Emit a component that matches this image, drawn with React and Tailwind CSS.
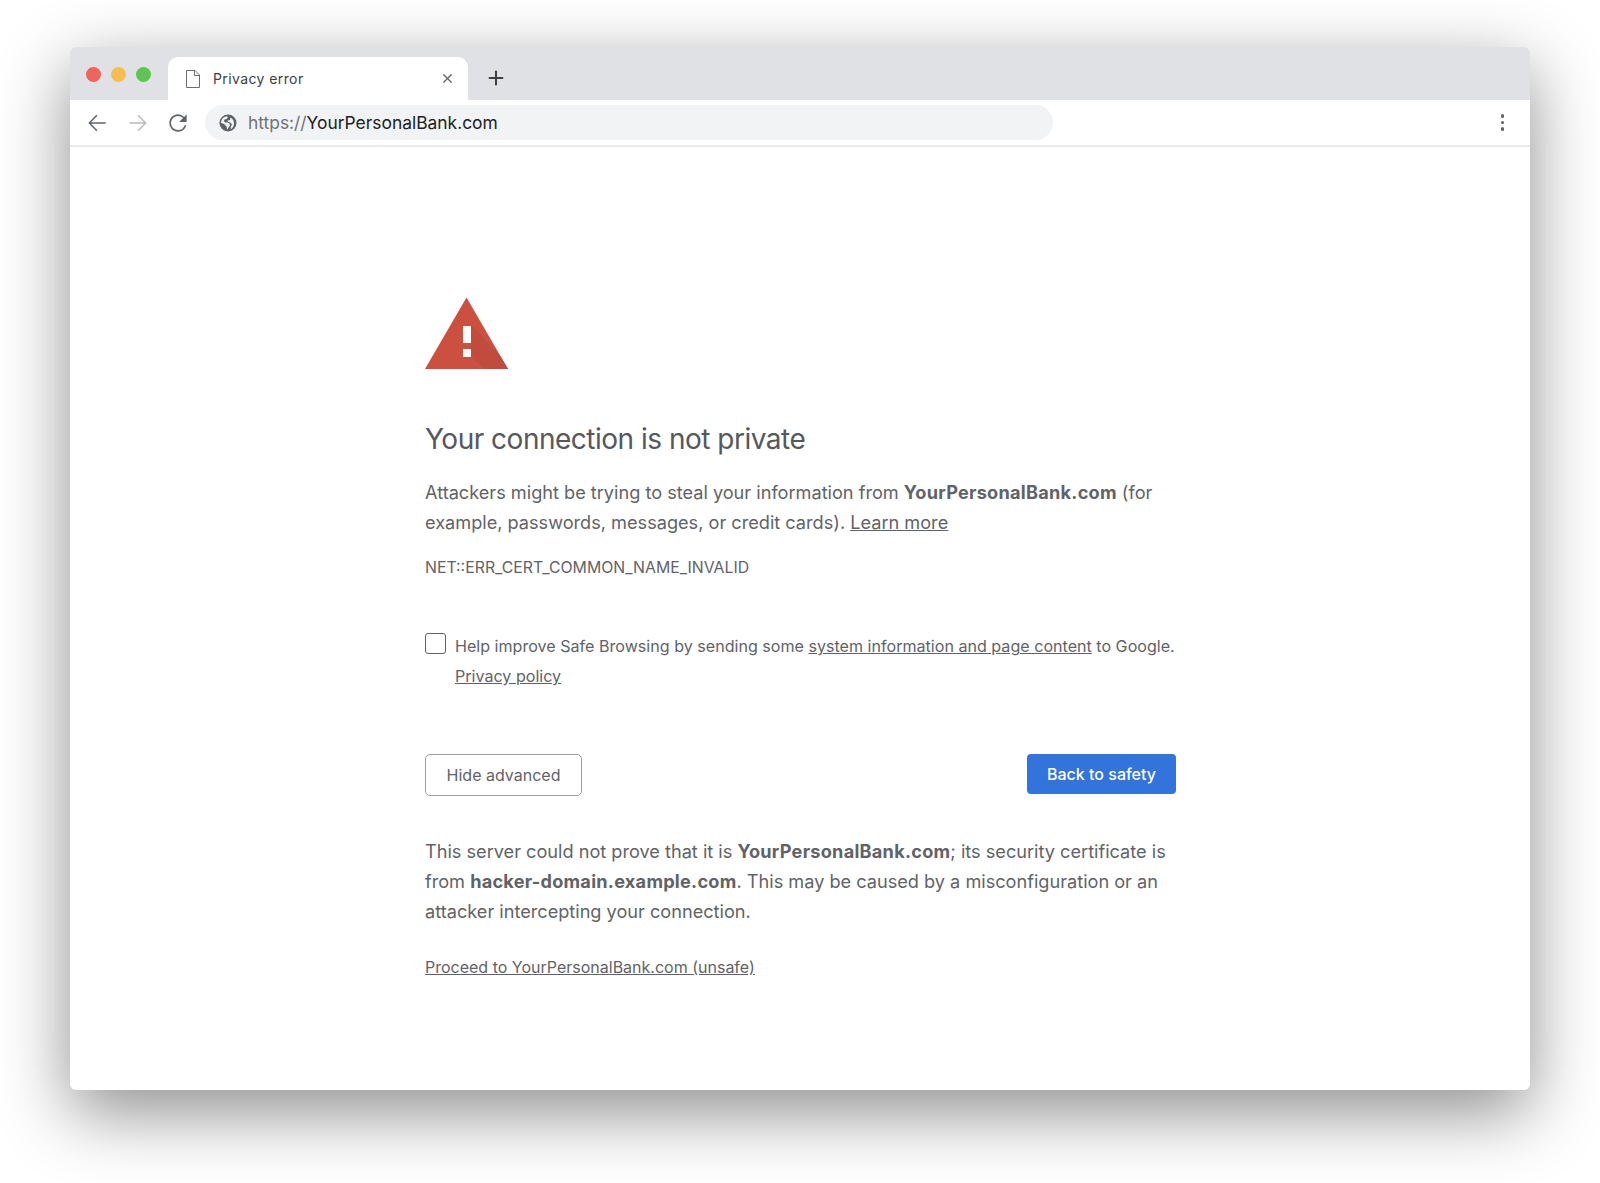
import { Plus, X } from "lucide-react";

const Warning = () => (
    <svg width="84" height="73" viewBox="0 0 84 73">
        <path d="M41.5 0.5 L83 72 L0 72 Z" fill="#cb5040" />
        <path d="M46 29 L52 34 L76 60 L83 72 L60 72 L46 60 Z" fill="#c14b3c" />
        <rect x="38" y="29" width="8" height="17" fill="#fff" />
        <rect x="38" y="52" width="8" height="8" fill="#fff" />
    </svg>
);

const Globe = () => (
    <svg width="20" height="20" viewBox="0 0 20 20" fill="#5f6368">
        <path d="M10 1.500a8.500 8.500 0 1 0 0 17 8.500 8.500 0 0 0 0-17zM8.800 3.200l1.200 1-1.500 1.800-2 .5-.8 1.500 1.500 1.500H10l1.800 1.500v1.700l-1.500 2.200-1 1.500-.8-3-2.500-2.500-3-1.200a7 7 0 0 1 5.800-6.500zM13 16.200l-.3-2.400 1.300-2-1.500-2.300-2.500-.5-.5-1.500 2.500-.5.500-2.600a7 7 0 0 1 .5 11.800z" fillRule="evenodd" />
    </svg>
);

const PageIcon = () => (
    <svg width="14" height="18" viewBox="0 0 14 18" fill="none" stroke="#6b6e72" strokeWidth="1">
        <path d="M1 .5h8l4.500 4.500v12.500H.5V.5z" />
        <path d="M8.500 .5v5h5" />
    </svg>
);

const Arrow = ({ className }) => (
    <svg width="26" height="26" viewBox="0 0 24 24" fill="currentColor" className={className}>
        <path d="M20 11.300H6.500l5.900-5.900-1-1L4 12l7.400 7.600 1-1-5.900-5.900H20z" />
    </svg>
);

export default function App() {
    return (
        <div className="bg-white w-[1600px] h-[1183px] overflow-hidden pt-[47px] pl-[70px] font-['Inter',sans-serif]">
            <div className="w-[1460px] h-[1043px] bg-white rounded-[6px] shadow-[0_22px_70px_rgba(0,0,0,0.45)] overflow-hidden flex flex-col">
                {/* Tab strip */}
                <div className="h-[53px] shrink-0 bg-[#dfe1e5] flex pl-[16px]">
                    <div className="flex gap-[10px] pt-[20px]">
                        <span className="w-[15px] h-[15px] rounded-full bg-[#f0645c]" />
                        <span className="w-[15px] h-[15px] rounded-full bg-[#f6be50]" />
                        <span className="w-[15px] h-[15px] rounded-full bg-[#5ec454]" />
                    </div>
                    <div className="ml-[17px] mt-[10px] w-[300px] h-[43px] bg-white rounded-t-[10px] flex items-center pl-[18px] pr-[13px]">
                        <PageIcon />
                        <span className="ml-[13px] text-[14px] tracking-[0.4px] text-[#3c4043] flex-1">Privacy error</span>
                        <X size={15} strokeWidth={2} className="text-[#5f6368]" />
                    </div>
                    <div className="ml-[17px] mt-[20px]">
                        <Plus size={22} strokeWidth={2.2} className="text-[#3c4043]" />
                    </div>
                </div>
                {/* Toolbar */}
                <div className="h-[47px] shrink-0 bg-white border-b-2 border-[#e8eaed] flex items-center pl-[14px] pr-[26px]">
                    <Arrow className="text-[#5f6368]" />
                    <Arrow className="ml-[15px] rotate-180 text-[#b8babd]" />
                    <svg width="26" height="26" viewBox="0 0 24 24" fill="#5f6368" className="ml-[14px]">
                        <path d="M17.650 6.350A7.958 7.958 0 0 0 12 4c-4.420 0-7.990 3.580-7.990 8s3.570 8 7.990 8c3.730 0 6.840-2.550 7.730-6h-1.600A6.500 6.500 0 0 1 12 18.500 6.500 6.500 0 0 1 5.500 12 6.500 6.500 0 0 1 12 5.500c1.800 0 3.400.8 4.600 1.900L13 11h7V4l-2.350 2.350z" />
                    </svg>
                    <div className="ml-[14px] w-[848px] h-[35px] rounded-full bg-[#f1f3f4] flex items-center pl-[13px] text-[17.400px]">
                        <Globe />
                        <span className="ml-[10px] pt-[1px] text-[#6f7276]">https://</span>
                        <span className="pt-[1px] text-[#202124]">YourPersonalBank.com</span>
                    </div>
                    <div className="ml-auto flex flex-col gap-[3px]">
                        <span className="w-[3.500px] h-[3.500px] rounded-full bg-[#5f6368]" />
                        <span className="w-[3.500px] h-[3.500px] rounded-full bg-[#5f6368]" />
                        <span className="w-[3.500px] h-[3.500px] rounded-full bg-[#5f6368]" />
                    </div>
                </div>
                {/* Interstitial */}
                <div className="flex-1 pl-[355px] pt-[150px] text-[#5f6368]">
                    <div className="w-[751px]">
                        <Warning />
                        <h1 className="mt-[51px] text-[28px] leading-[36px] tracking-[-0.5px] font-normal text-[#55585c]">Your connection is not private</h1>
                        <p className="mt-[20px] text-[18.150px] leading-[30px]">
                            Attackers might be trying to steal your information from <b className="font-bold tracking-[0.25px]">YourPersonalBank.com</b> (for example, passwords, messages, or credit cards). <a className="underline">Learn more</a>
                        </p>
                        <p className="mt-[16px] text-[15.850px] leading-[30px]">NET::ERR_CERT_COMMON_NAME_INVALID</p>
                        <div className="mt-[50px] flex gap-[9px]">
                            <span className="shrink-0 w-[21px] h-[21px] rounded-[3px] border border-[#5f6368]" />
                            <p className="text-[16.100px] leading-[30px] mt-[-2px]">
                                Help improve Safe Browsing by sending some <a className="underline">system information and page content</a> to Google. <a className="underline">Privacy policy</a>
                            </p>
                        </div>
                        <div className="mt-[63px] flex justify-between items-start">
                            <button className="w-[157px] h-[42px] rounded-[5px] border border-[#9aa0a6] text-[16px] text-[#5f6368]">Hide advanced</button>
                            <button className="w-[149px] h-[40px] rounded-[4px] bg-[#3273dc] text-[16px] font-medium text-white">Back to safety</button>
                        </div>
                        <p className="mt-[40px] text-[18.150px] leading-[30px]">
                            This server could not prove that it is <b className="font-bold tracking-[0.25px]">YourPersonalBank.com</b>; its security certificate is from <b className="font-bold tracking-[0.25px]">hacker-domain.example.com</b>. This may be caused by a misconfiguration or an attacker intercepting your connection.
                        </p>
                        <p className="mt-[26px] text-[16px] leading-[30px]"><a className="underline">Proceed to YourPersonalBank.com (unsafe)</a></p>
                    </div>
                </div>
            </div>
        </div>
    );
}
